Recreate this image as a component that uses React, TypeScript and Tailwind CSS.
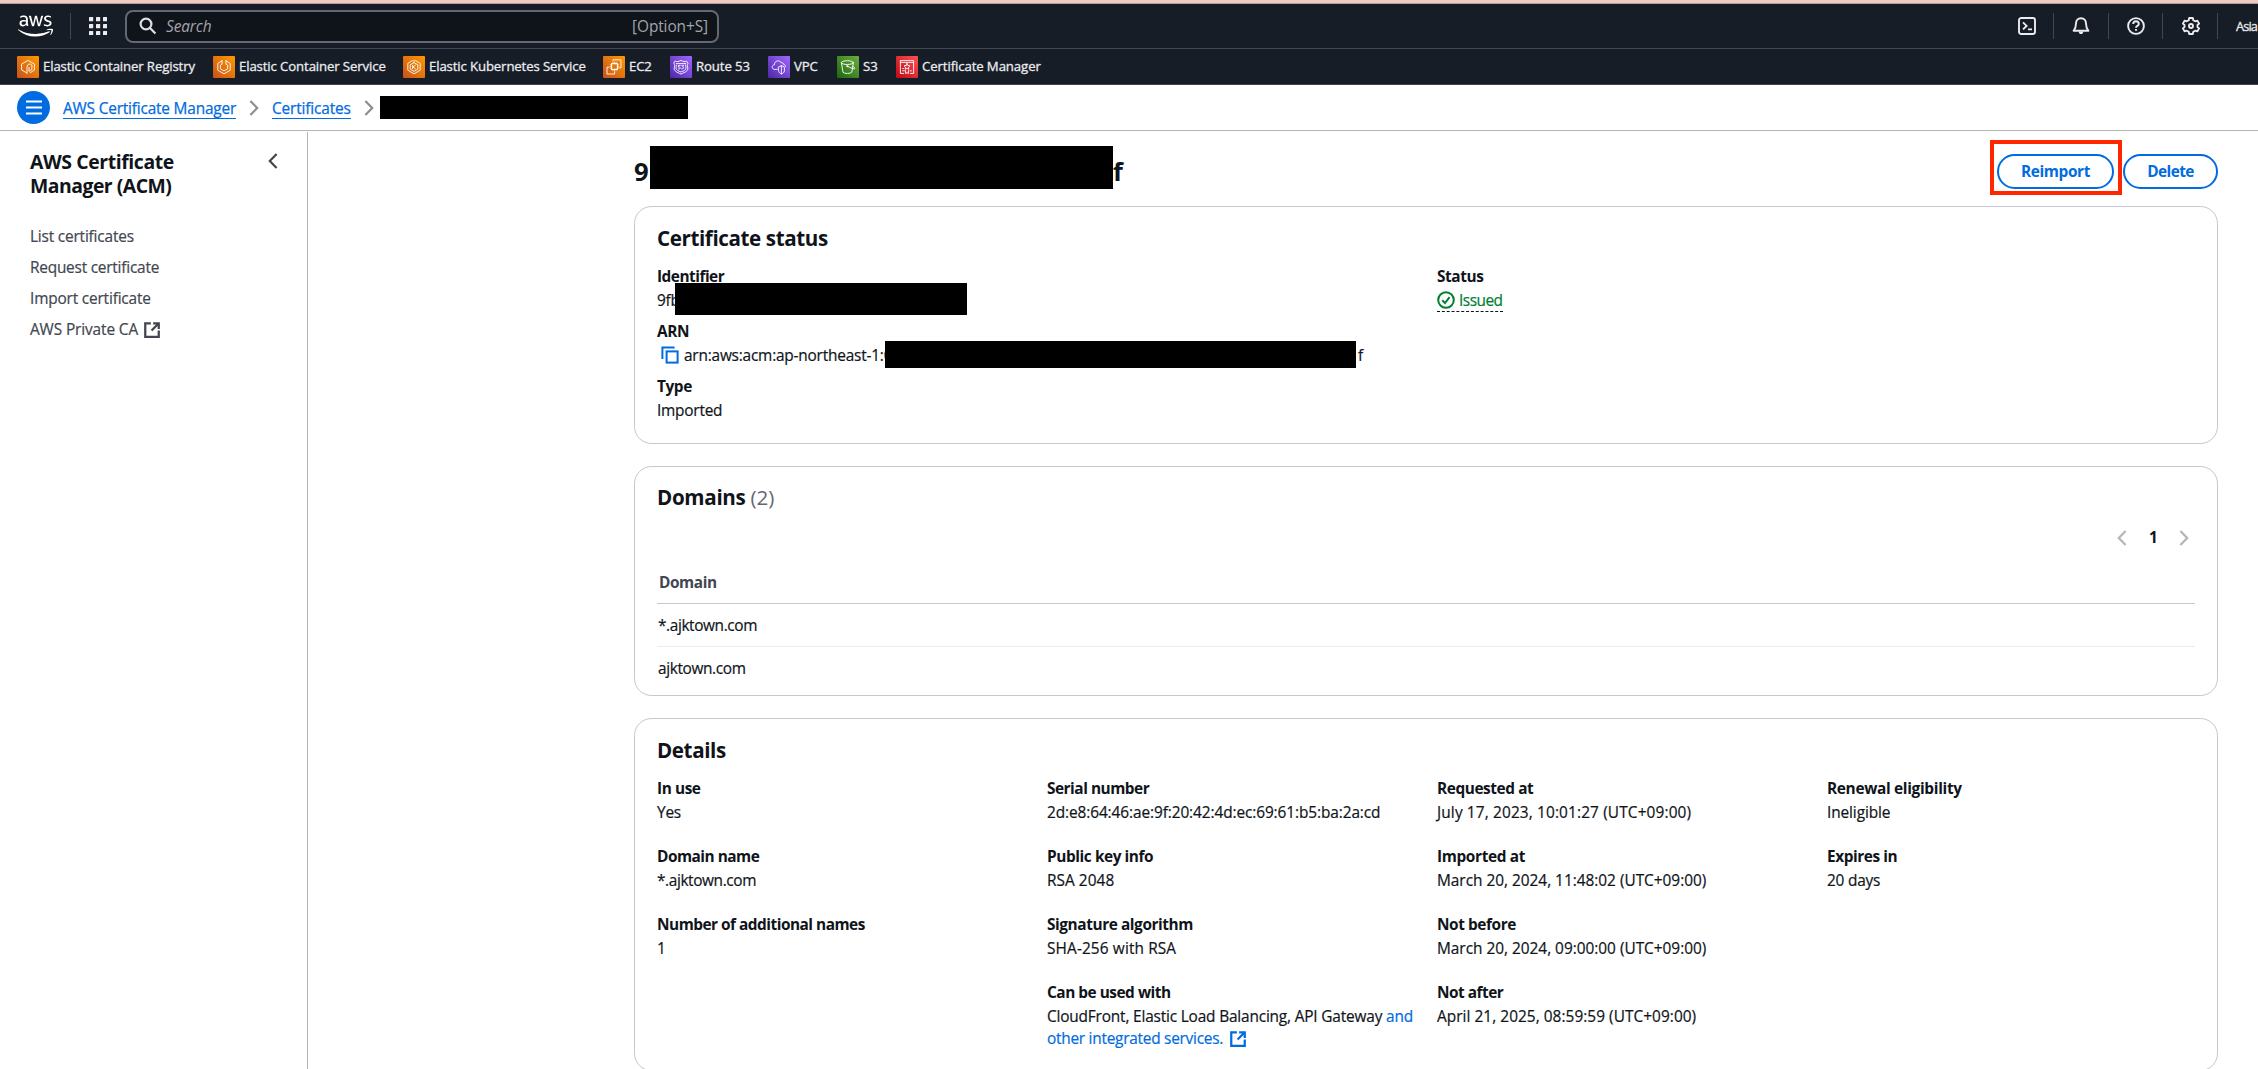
import type { ReactNode } from "react";
import { FaAws } from "react-icons/fa";

/* ---------- service tiles ---------- */

function Tile({ id, from, to, children }: { id: string; from: string; to: string; children: ReactNode }) {
  return (
    <svg viewBox="0 0 22 22" className="h-[22px] w-[22px] shrink-0" fill="none" stroke="#fff" strokeWidth="0.9" strokeLinejoin="round" strokeLinecap="round">
      <defs>
        <linearGradient id={id} x1="0" y1="1" x2="1" y2="0">
          <stop offset="0" stopColor={from} />
          <stop offset="1" stopColor={to} />
        </linearGradient>
      </defs>
      <rect width="22" height="22" rx="1" fill={`url(#${id})`} stroke="none" />
      {children}
    </svg>
  );
}

const EcrIcon = () => (
  <Tile id="ecr" from="#C8511B" to="#FF9900">
    <path d="M9.6 16.8 L4.6 14 V8 L11 4.4 L17.4 8 V14 L13.4 16.6" />
    <path d="M10 17.4 V11.4 C10 9.2 11.4 8 13 8 C14.2 8 14.9 8.8 14.9 10 V13.4 L12 15.4 V11.4" />
  </Tile>
);

const EcsIcon = () => (
  <Tile id="ecs" from="#C8511B" to="#FF9900">
    <path d="M8.8 5 L4.8 7.4 V14.2 L11 17.8 L17.2 14.2 V7.4 L13.2 5" />
    <path d="M9 4.4 V8.2 L7.4 9.2 V12.8 L11 14.9 L14.6 12.8 V9.2 L13 8.2 V4.4" />
  </Tile>
);

const EksIcon = () => (
  <Tile id="eks" from="#C8511B" to="#FF9900">
    <path d="M9.4 4.6 L4.8 7.4 V14.2 L11 17.8 L17.2 14.2 V7.4 L12.6 4.6" />
    <path d="M11 4.2 V6.6 L7.2 8.8 V13.2 L11 15.4 L14.8 13.2 V8.8 L11 6.6" />
    <path d="M9.6 9.2 V12.8 M12.4 9.2 L9.8 11 L12.4 12.8" />
  </Tile>
);

const Ec2Icon = () => (
  <Tile id="ec2" from="#C8511B" to="#FF9900">
    <rect x="8.6" y="7.6" width="5.8" height="5.8" strokeWidth="1.1" />
    <path d="M9.9 6.2 V7.6 M11.5 6.2 V7.6 M13.1 6.2 V7.6 M9.9 13.4 V14.8 M11.5 13.4 V14.8 M13.1 13.4 V14.8 M7.2 8.9 H8.6 M7.2 10.5 H8.6 M7.2 12.1 H8.6 M14.4 8.9 H15.8 M14.4 10.5 H15.8 M14.4 12.1 H15.8" strokeWidth="0.7" />
    <path d="M10 5 V3.8 H18 V11.8 H16.8 M6 11.2 H4 V18 H11.6 V15.8" />
  </Tile>
);

const RouteIcon = () => (
  <Tile id="r53" from="#4D27A8" to="#A166FF">
    <path d="M5.4 5.2 C7 6 8.8 5.6 11 4.4 C13.2 5.6 15 6 16.6 5.2 L18 7.4 C17 9 17.4 10.4 17.8 12 C18.2 14.8 15.6 16.2 11 18 C6.4 16.2 3.8 14.8 4.2 12 C4.6 10.4 5 9 4 7.4 Z" />
    <path d="M6.2 7.6 H15.8 M6.4 9 C6.4 10.4 6 11.2 6 12.2 C6 14 8.2 14.9 11 16 C13.8 14.9 16 14 16 12.2 C16 11.2 15.6 10.4 15.6 9" />
    <path d="M10.2 9.4 H8.4 V11 C9.4 10.8 10.3 11.2 10.3 12 C10.3 13 9.2 13.2 8.3 12.8 M11.8 9.4 H13.6 L12.6 10.9 C14.2 11 14 13.3 11.8 12.8" />
  </Tile>
);

const VpcIcon = () => (
  <Tile id="vpc" from="#4D27A8" to="#A166FF">
    <path d="M9.2 13.4 H6.8 C3.4 13.2 3.4 9.2 6.4 8.8 C6.2 4.6 12 3.4 13.4 7 C14.6 6.4 15.8 7.2 15.8 8.6 C17 8.8 17.6 9.6 17.6 10.4" />
    <path d="M10.6 11 L13.4 9.6 L16.4 11 V15 C16.2 16.6 14.8 17.4 13.4 18 C12 17.4 10.8 16.6 10.6 15 Z M13.4 9.8 V17.8" />
  </Tile>
);

const S3Icon = () => (
  <Tile id="s3" from="#1B660F" to="#6CAE3E">
    <ellipse cx="10.4" cy="6.6" rx="6" ry="1.9" />
    <path d="M4.4 6.8 L6 16.2 C7.4 17.9 13.4 17.9 14.8 16.2 L16.4 6.8" />
    <path d="M10.4 10.2 C13 11.6 15.6 12.8 17.4 12.8 C18.6 12.4 17 10.8 15.8 10.4" />
    <circle cx="10.2" cy="10.2" r="0.6" fill="#fff" />
  </Tile>
);

const CertIcon = () => (
  <Tile id="acm" from="#BD0816" to="#FF5252">
    <path d="M7.6 17.4 H4.4 V6.4 H17.6 V17.4 H14.4 M4.4 4.6 H17.6 V6.4 M4.4 4.6 V6.4" />
    <path d="M11 7.6 L11.9 9.5 L14 9.8 L12.5 11.2 L12.9 13.3 L11 12.3 L9.1 13.3 L9.5 11.2 L8 9.8 L10.1 9.5 Z" />
    <path d="M6.6 14.8 H8.4 M6.6 12.6 H7.6 M9.6 14.6 V17.6 L11 16.6 L12.4 17.6 V14.6 M14 14.8 H15.4" />
  </Tile>
);

/* ---------- line icons ---------- */

const ExternalIcon = () => (
  <svg viewBox="0 0 16 16" className="h-[18px] w-[18px] shrink-0" fill="none" stroke="currentColor" strokeWidth="2">
    <path d="M14 8.4 V14 H2 V2 H7 M9 2 H14.2 M14 1.2 V7 M13.6 2.4 L7.6 8.4" />
  </svg>
);

function Chevron({ dir, className }: { dir: "left" | "right"; className: string }) {
  return (
    <svg viewBox="0 0 10 16" className={`h-4 w-[10px] shrink-0 ${className}`} fill="none" stroke="currentColor" strokeWidth="2.2">
      <path d={dir === "left" ? "M8.6 1 L1.8 8 L8.6 15" : "M1.4 1 L8.2 8 L1.4 15"} />
    </svg>
  );
}

/* ---------- top navigation ---------- */

const services: [() => ReactNode, string, string][] = [
  [EcrIcon, "Elastic Container Registry", "w-[152px] tracking-[-0.12px]"],
  [EcsIcon, "Elastic Container Service", "w-[146px] tracking-[-0.12px]"],
  [EksIcon, "Elastic Kubernetes Service", "w-[156px] tracking-[-0.13px]"],
  [Ec2Icon, "EC2", "w-[23px] tracking-[-0.2px]"],
  [RouteIcon, "Route 53", "w-[54px] tracking-[-0.1px]"],
  [VpcIcon, "VPC", "w-[25px] tracking-[-0.1px]"],
  [S3Icon, "S3", "w-[15px] tracking-[-0.1px]"],
  [CertIcon, "Certificate Manager", "w-[120px] tracking-[-0.1px]"],
];

const Separator = () => <div className="h-[26px] w-px shrink-0 bg-[#424650]" />;

function TopNav() {
  return (
    <header className="bg-[#161d26] text-[#ebebf0]">
      <div className="h-1 border-b border-[#b79c99] bg-[#efcbc3]" />
      <div className="flex h-[45px] items-center border-b border-[#424650] pl-[18px]">
        <FaAws className="h-[28px] w-[35px] shrink-0 text-white" />
        <div className="ml-[17px]">
          <Separator />
        </div>
        <svg viewBox="0 0 18 18" className="ml-[18px] h-[18px] w-[18px] shrink-0" fill="#ebebf0">
          {[0, 7, 14].map((y) => [0, 7, 14].map((x) => <rect key={`${x}-${y}`} x={x} y={y} width="4.2" height="4.2" rx="0.5" />))}
        </svg>
        <div className="ml-[18px] flex h-[33px] w-[594px] shrink-0 items-center rounded-[8px] border-2 border-[#656871] bg-[#0f141a] pr-[9px] pl-[12px] text-[15.4px]">
          <svg viewBox="0 0 18 18" className="h-[18px] w-[18px] shrink-0" fill="none" stroke="#dedee3" strokeWidth="2.2">
            <circle cx="7" cy="7" r="5.4" />
            <path d="M11 11 L16.4 16.6" />
          </svg>
          <span className="mt-px ml-[9px] tracking-[-0.1px] text-[#a4a4ad] italic">Search</span>
          <span className="mt-px ml-auto tracking-[-0.08px] text-[#a4a4ad]">[Option+S]</span>
        </div>
        <div className="ml-auto flex items-center">
          <svg viewBox="0 0 18 18" className="h-[18px] w-[18px]" fill="none" stroke="#ebebf0" strokeWidth="1.9">
            <rect x="1" y="1" width="16" height="16" rx="2.2" />
            <path d="M5 5.4 L8.6 8.9 L5 12.4 M10 12.4 H14" />
          </svg>
          <div className="ml-[17px]">
            <Separator />
          </div>
          <svg viewBox="0 0 18 18" className="ml-[18px] h-[18px] w-[18px]" fill="none" stroke="#ebebf0" strokeWidth="1.9" strokeLinejoin="round">
            <path d="M1.6 13.8 C3.4 11.8 4 10 4 6.6 C4 3.4 6 1.2 9 1.2 C12 1.2 14 3.4 14 6.6 C14 10 14.6 11.8 16.4 13.8 Z" />
            <path d="M6.6 14.4 C6.8 17.8 11.2 17.8 11.4 14.4 Z" fill="#ebebf0" stroke="none" />
          </svg>
          <div className="ml-[18px]">
            <Separator />
          </div>
          <svg viewBox="0 0 18 18" className="ml-[18px] h-[18px] w-[18px]" fill="none" stroke="#ebebf0" strokeWidth="1.9">
            <circle cx="9" cy="9" r="7.9" />
            <path d="M6.2 7 C6.2 3.4 11.8 3.4 11.8 7 C11.8 9 9 8.8 9 10.8 M9 12 V13.8" />
          </svg>
          <div className="ml-[17px]">
            <Separator />
          </div>
          <svg viewBox="0 0 18 18" className="ml-[19px] h-[18px] w-[18px]" fill="none" stroke="#ebebf0" strokeWidth="1.9" strokeLinejoin="round">
            <path d="M7.2 1 H10.8 L11.3 3.2 L13.2 4.3 L15.4 3.6 L17.1 6.6 L15.5 8 V10 L17.1 11.4 L15.4 14.4 L13.2 13.7 L11.3 14.8 L10.8 17 H7.2 L6.7 14.8 L4.8 13.7 L2.6 14.4 L0.9 11.4 L2.5 10 V8 L0.9 6.6 L2.6 3.6 L4.8 4.3 L6.7 3.2 Z" />
            <circle cx="9" cy="9" r="2" />
          </svg>
          <div className="ml-[17px]">
            <Separator />
          </div>
          <span className="mt-px ml-[18px] w-[22px] text-[12.8px] tracking-[-0.9px] whitespace-nowrap [-webkit-text-stroke:0.3px]">Asia</span>
        </div>
      </div>
      <nav className="flex h-[36px] items-center gap-[18px] border-b border-[#424650] pl-[17px] text-[13.2px] [-webkit-text-stroke:0.3px]">
        {services.map(([Icon, name, cls]) => (
          <a key={name} className="flex items-center gap-1">
            <Icon />
            <span className={`${cls} whitespace-nowrap`}>{name}</span>
          </a>
        ))}
      </nav>
    </header>
  );
}

function Breadcrumbs() {
  return (
    <div className="flex h-[46px] items-center border-b border-[#b4b4bb] pl-[17px] text-[15.4px] text-[#006ce0] [-webkit-text-stroke:0.25px]">
      <button className="flex h-[33px] w-[33px] items-center justify-center rounded-full bg-[#006ce0]">
        <svg viewBox="0 0 16 15" className="h-[15px] w-4" fill="none" stroke="#fff" strokeWidth="2">
          <path d="M0 1.5 H16 M0 7.5 H16 M0 13.5 H16" />
        </svg>
      </button>
      <a className="mt-px ml-[13px] h-[22px] w-[173px] border-b border-[#006ce0] pt-px leading-[21px] tracking-[-0.18px] whitespace-nowrap">AWS Certificate Manager</a>
      <Chevron dir="right" className="ml-[13px] text-[#8c8c94]" />
      <a className="mt-px ml-[13px] h-[22px] w-[79px] border-b border-[#006ce0] pt-px leading-[21px] tracking-[-0.15px] whitespace-nowrap">Certificates</a>
      <Chevron dir="right" className="ml-[13px] text-[#8c8c94]" />
      <div className="ml-[6px] h-[23px] w-[308px] bg-black" />
    </div>
  );
}

function Sidebar() {
  return (
    <aside className="mt-px w-[308px] shrink-0 border-r border-[#b4b4bb] pt-[18px] pl-[30px]">
      <div className="flex items-start justify-between pr-[29px]">
        <h2 className="text-[19.4px] leading-6 font-bold tracking-[-0.4px]">
          AWS Certificate
          <br />
          <span className="tracking-[-0.5px]">Manager (ACM)</span>
        </h2>
        <Chevron dir="left" className="mt-[3px] text-[#424650]" />
      </div>
      <ul className="mt-[23px] text-[15.4px] leading-[31px] text-[#424650] [-webkit-text-stroke:0.2px]">
        <li className="tracking-[-0.18px]">List certificates</li>
        <li className="tracking-[-0.22px]">Request certificate</li>
        <li className="tracking-[-0.17px]">Import certificate</li>
        <li className="flex items-center gap-[5px] tracking-[-0.11px]">
          AWS Private CA
          <ExternalIcon />
        </li>
      </ul>
    </aside>
  );
}

/* ---------- content ---------- */

function Card({ title, children, className = "" }: { title: ReactNode; children: ReactNode; className?: string }) {
  return (
    <section className={`rounded-[17.6px] border border-[#c6c6cd] px-[22px] pt-[17px] ${className}`}>
      <h2 className="h-7 text-[20.6px] leading-7 font-bold tracking-[-0.4px]">{title}</h2>
      {children}
    </section>
  );
}

function Field({ label, children, track = "tracking-[-0.22px]", labelTrack = "tracking-[-0.42px]" }: { label: string; children: ReactNode; track?: string; labelTrack?: string }) {
  return (
    <div className="leading-[22px]">
      <div className={`font-bold ${labelTrack}`}>{label}</div>
      <div className={`mt-0.5 whitespace-nowrap [-webkit-text-stroke:0.2px] ${track}`}>{children}</div>
    </div>
  );
}

const buttonClass = "flex h-[35px] items-center justify-center rounded-full border-2 border-[#006ce0] pt-px font-bold text-[#006ce0]";

function PageTitle() {
  return (
    <div className="mt-[9px] flex h-[55px] items-center justify-between">
      <h1 className="relative flex h-[43px] w-[489px] items-center justify-between pt-[9px] text-[25.6px] font-bold">
        <span>9</span>
        <span>f</span>
        <span className="absolute top-0 left-4 h-[43px] w-[463px] bg-black" />
      </h1>
      <div className="flex items-center">
        <div className="h-[55px] border-4 border-[#ff2600] pt-[10px] pr-1 pl-[3px]">
          <button className={`${buttonClass} w-[117px] tracking-[-0.38px]`}>Reimport</button>
        </div>
        <button className={`${buttonClass} mt-[8px] ml-px w-[95px] tracking-[-0.6px]`}>Delete</button>
      </div>
    </div>
  );
}

function StatusCard() {
  return (
    <Card title="Certificate status" className="mt-[11px] h-[238px]">
      <div className="mt-[14px] grid grid-cols-2 gap-x-[22px]">
        <div className="flex flex-col gap-[9px]">
          <Field label="Identifier" labelTrack="tracking-[-0.5px]">
            <div className="relative h-[22px]">
              9fb
              <span className="absolute top-[-7px] left-[18px] h-8 w-[292px] bg-black" />
            </div>
          </Field>
          <Field label="ARN">
            <div className="relative flex h-[22px] items-center">
              <svg viewBox="0 0 18 18" className="mb-[2px] ml-1 h-[18px] w-[18px]" fill="none" stroke="#006ce0" strokeWidth="2">
                <path d="M13.6 1.4 H1.4 V13" />
                <rect x="5.6" y="5.4" width="11" height="11.2" />
              </svg>
              <span className="ml-[5px] tracking-[-0.2px]">arn:aws:acm:ap-northeast-1:0</span>
              <span className="absolute top-[-4px] left-[228px] h-[27px] w-[471px] bg-black" />
              <span className="absolute left-[701px]">f</span>
            </div>
          </Field>
          <Field label="Type">Imported</Field>
        </div>
        <Field label="Status">
          <span className="inline-flex h-[22px] w-[66px] items-center gap-[4px] border-b border-dashed border-[#0f141a] tracking-[-0.5px] text-[#00802f]">
            <svg viewBox="0 0 18 18" className="mb-px h-[18px] w-[18px] shrink-0" fill="none" stroke="currentColor" strokeWidth="2">
              <circle cx="9" cy="9" r="7.8" />
              <path d="M5.2 9.2 L8 12 L12.6 6.2" />
            </svg>
            Issued
          </span>
        </Field>
      </div>
    </Card>
  );
}

function DomainsCard() {
  return (
    <section className="mt-[22px] h-[230px] rounded-[17.6px] border border-[#c6c6cd] px-[22px] pt-4">
      <h2 className="h-7 text-[20.6px] leading-7 font-bold tracking-[-0.32px]">
        Domains <span className="font-normal tracking-normal text-[#656871]">(2)</span>
      </h2>
      <div className="mt-4 flex h-[22px] items-center justify-end pr-[6px]">
        <Chevron dir="left" className="mb-px text-[#b4b4bb]" />
        <span className="mx-[22px] w-2 font-bold">1</span>
        <Chevron dir="right" className="mb-px text-[#b4b4bb]" />
      </div>
      <div className="mt-3 h-[43px] border-b border-[#c6c6cd] pl-[2px] leading-[44px] font-bold tracking-[-0.42px] text-[#424650]">Domain</div>
      <div className="h-[43px] border-b border-[#ebebf0] pl-px leading-[44px] tracking-[-0.39px] [-webkit-text-stroke:0.2px]">*.ajktown.com</div>
      <div className="h-[43px] pl-px leading-[44px] tracking-[-0.36px] [-webkit-text-stroke:0.2px]">ajktown.com</div>
    </section>
  );
}

function DetailsCard() {
  return (
    <Card title="Details" className="mt-[22px] h-[353px]">
      <div className="mt-[14px] grid grid-cols-4 gap-x-[22px]">
        <div className="flex flex-col gap-[22px]">
          <Field label="In use">Yes</Field>
          <Field label="Domain name" labelTrack="tracking-[-0.5px]" track="tracking-[-0.39px]">*.ajktown.com</Field>
          <Field label="Number of additional names" labelTrack="tracking-[-0.5px]">1</Field>
        </div>
        <div className="flex flex-col gap-[22px]">
          <Field label="Serial number" labelTrack="tracking-[-0.48px]" track="tracking-[-0.09px]">2d:e8:64:46:ae:9f:20:42:4d:ec:69:61:b5:ba:2a:cd</Field>
          <Field label="Public key info" track="tracking-[0.05px]">RSA 2048</Field>
          <Field label="Signature algorithm" track="tracking-[0.12px]">SHA-256 with RSA</Field>
          <Field label="Can be used with" labelTrack="tracking-[-0.48px]" track="tracking-[-0.17px]">
            CloudFront, Elastic Load Balancing, API Gateway <span className="text-[#006ce0]">and</span>
            <div className="flex items-center gap-[6px] tracking-[-0.25px] text-[#006ce0]">
              other integrated services.
              <ExternalIcon />
            </div>
          </Field>
        </div>
        <div className="flex flex-col gap-[22px]">
          <Field label="Requested at" track="tracking-[0.14px]">July 17, 2023, 10:01:27 (UTC+09:00)</Field>
          <Field label="Imported at" labelTrack="tracking-[-0.36px]" track="tracking-[-0.01px]">March 20, 2024, 11:48:02 (UTC+09:00)</Field>
          <Field label="Not before" track="tracking-[-0.01px]">March 20, 2024, 09:00:00 (UTC+09:00)</Field>
          <Field label="Not after" labelTrack="tracking-[-0.5px]" track="tracking-[0.05px]">April 21, 2025, 08:59:59 (UTC+09:00)</Field>
        </div>
        <div className="flex flex-col gap-[22px]">
          <Field label="Renewal eligibility" labelTrack="tracking-[-0.32px]" track="tracking-[-0.1px]">Ineligible</Field>
          <Field label="Expires in">20 days</Field>
        </div>
      </div>
    </Card>
  );
}

export default function App() {
  return (
    <div className="flex h-[1069px] w-full flex-col overflow-hidden bg-white font-['Open_Sans','Noto_Sans',sans-serif] text-[15.4px] text-[#0f141a]">
      <TopNav />
      <Breadcrumbs />
      <div className="flex min-h-0 flex-1">
        <Sidebar />
        <main className="min-w-0 flex-1 pr-10 pl-[326px]">
          <PageTitle />
          <StatusCard />
          <DomainsCard />
          <DetailsCard />
        </main>
      </div>
    </div>
  );
}
